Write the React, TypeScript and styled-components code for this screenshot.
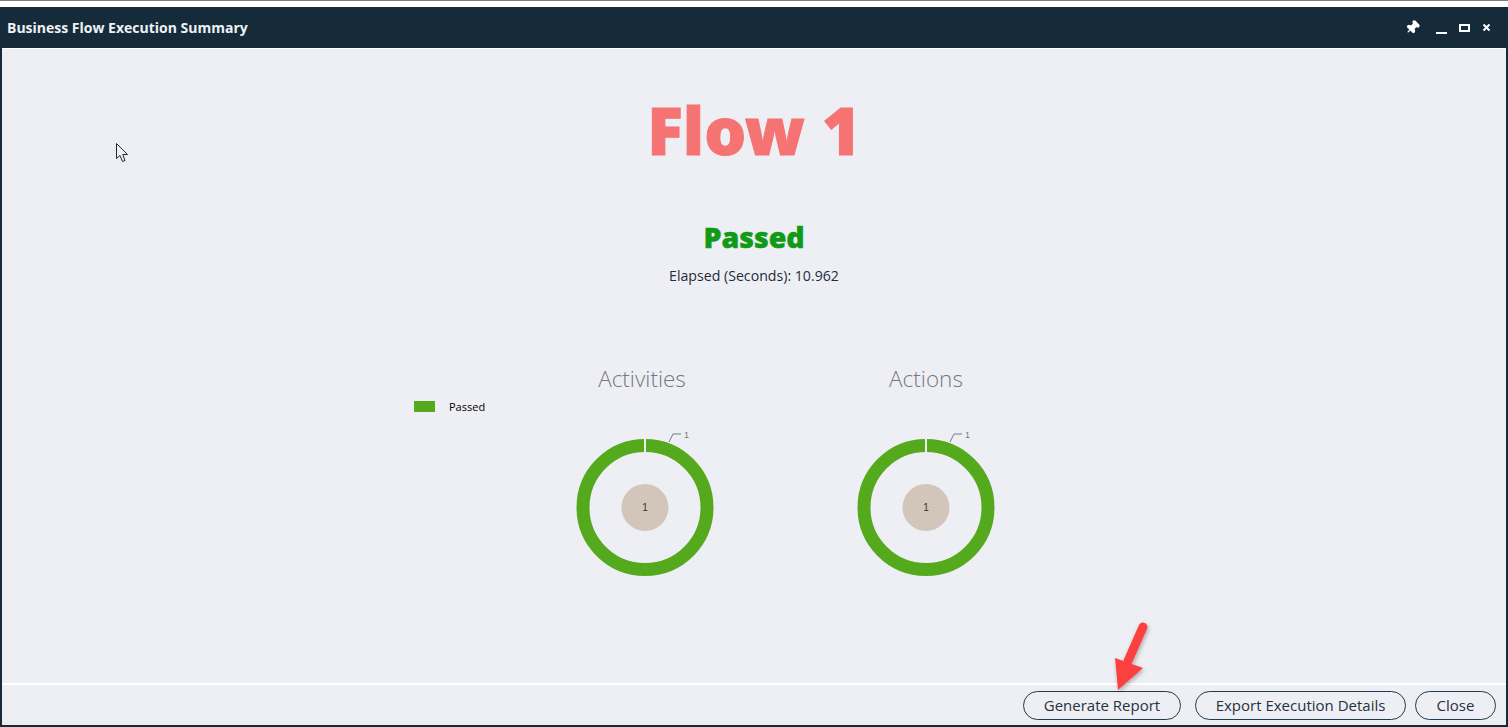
import React from "react";
import styled, { createGlobalStyle } from "styled-components";
import { Pin } from "lucide-react";

const GlobalStyle = createGlobalStyle`
  html, body {
    margin: 0;
    padding: 0;
    background: #fff;
  }
  #root {
    height: 727px;
  }
`;

const Page = styled.div`
  position: relative;
  box-sizing: border-box;
  width: 1508px;
  height: 727px;
  overflow: hidden;
  display: flex;
  flex-direction: column;
  padding-top: 7px;
  background: #fff;
  border-top: 1px solid #7d7d7d;
  font-family: "Open Sans", sans-serif;
`;

const Window = styled.div`
  flex: 1;
  min-height: 0;
  display: flex;
  flex-direction: column;
  border-left: 2px solid #162b3a;
  border-right: 2px solid #162b3a;
  border-bottom: 2px solid #162b3a;
  margin-top: -1px;
`;

const TitleBar = styled.div`
  flex: none;
  height: 41px;
  margin: 0 -2px;
  padding: 0 17px 0 7px;
  display: flex;
  align-items: center;
  justify-content: space-between;
  background: #162b3a;
`;

const Title = styled.div`
  color: #eef1f6;
  font-size: 14px;
  font-weight: 700;
`;

const WindowControls = styled.div`
  display: flex;
  align-items: center;
  gap: 12px;
  color: #fff;
`;

const ControlIcon = styled.svg`
  display: block;
  fill: none;
  stroke: #fff;
`;

const PinIcon = styled(Pin)`
  display: block;
  margin-right: 3px;
  fill: #fff;
  transform: rotate(45deg);
`;

const Body = styled.div`
  flex: 1;
  min-height: 0;
  display: flex;
  flex-direction: column;
  align-items: stretch;
  background: #eeeff5;
  border-top: 1px solid #fff;
`;

const FlowName = styled.h1`
  margin: 31px 0 0;
  color: #f57373;
  font-family: "Noto Sans", "Open Sans", sans-serif;
  font-size: 66px;
  line-height: 98px;
  font-weight: 900;
  text-align: center;
  -webkit-text-stroke: 1px #f57373;
`;

const Status = styled.div`
  margin-top: 40px;
  color: #119a18;
  font-family: "Noto Sans", "Open Sans", sans-serif;
  font-size: 28.5px;
  line-height: 38px;
  font-weight: 900;
  text-align: center;
  -webkit-text-stroke: 0.5px #119a18;
`;

const Elapsed = styled.div`
  margin-top: 10px;
  color: #1f2d3a;
  font-size: 14.15px;
  line-height: 19px;
  text-align: center;
`;

const ChartRow = styled.div`
  margin-top: 79px;
  padding-left: 412px;
  display: flex;
  align-items: flex-start;
`;

const Legend = styled.div`
  width: 90.5px;
  margin-top: 35px;
  display: flex;
  align-items: center;
  gap: 14px;
  color: #000;
  font-size: 11px;
  line-height: 15px;
  white-space: nowrap;
`;

const LegendSwatch = styled.span`
  flex: none;
  width: 21px;
  height: 11px;
  background: #54a91c;
`;

const ChartPanel = styled.div`
  width: 281px;
  display: flex;
  flex-direction: column;
  align-items: center;
`;

const ChartTitle = styled.div<{ $shift: number }>`
  margin-right: ${(p) => p.$shift}px;
  color: #77777e;
  font-size: 22.5px;
  line-height: 30px;
  font-weight: 300;
  font-family: "Open Sans", sans-serif;
`;

const ChartSvg = styled.svg`
  display: block;
  margin-top: 34px;
`;

const Footer = styled.div`
  flex: none;
  margin-top: auto;
  height: 42px;
  box-sizing: border-box;
  padding: 6px 10px 0 0;
  display: flex;
  justify-content: flex-end;
  border-top: 2px solid #fff;
`;

const Button = styled.button<{ $width: number; $gap: number }>`
  height: 29px;
  box-sizing: border-box;
  padding: 0 0 2px;
  width: ${(p) => p.$width}px;
  margin-right: ${(p) => p.$gap}px;
  border: 1px solid #1f3a4d;
  border-radius: 15px;
  background: transparent;
  color: #25323d;
  font-family: "Open Sans", sans-serif;
  font-size: 15px;
  cursor: pointer;
`;

const Arrow = styled.svg`
  position: absolute;
  left: 1105px;
  top: 613px;
  overflow: visible;
`;

const Cursor = styled.svg`
  position: absolute;
  left: 115px;
  top: 141px;
`;

const Donut = () => (
  <ChartSvg width="140" height="150" viewBox="0 0 140 150">
    <circle cx="70" cy="79.5" r="62" fill="none" stroke="#54a91c" strokeWidth="13" />
    <rect x="69" y="10" width="2" height="15" fill="#eeeff5" />
    <circle cx="70" cy="79.5" r="23.5" fill="#d2c5b9" />
    <path d="M94 14 L98 6 H106" fill="none" stroke="#77777d" strokeWidth="1" />
    <text x="109" y="10" fontSize="9" fill="#77777d" fontFamily="Liberation Sans, sans-serif">1</text>
    <text x="70" y="83" fontSize="10" fill="#333" textAnchor="middle" fontFamily="Liberation Sans, sans-serif">1</text>
  </ChartSvg>
);

const App: React.FC = () => {
  return (
    <Page>
      <GlobalStyle />
      <Window>
        <TitleBar>
          <Title>Business Flow Execution Summary</Title>
          <WindowControls>
            <PinIcon size={15} strokeWidth={2} />
            <ControlIcon width="12" height="12" viewBox="0 0 12 12" strokeWidth="2">
              <path d="M1 11H12" />
            </ControlIcon>
            <ControlIcon width="11" height="9" viewBox="0 0 11 9" strokeWidth="2">
              <rect x="1" y="2" width="9" height="6" />
            </ControlIcon>
            <ControlIcon width="9" height="9" viewBox="0 0 9 9" strokeWidth="2">
              <path d="M1.5 1.5L7.5 7.5M7.5 1.5L1.5 7.5" />
            </ControlIcon>
          </WindowControls>
        </TitleBar>
        <Body>
          <FlowName>Flow 1</FlowName>
          <Status>Passed</Status>
          <Elapsed>Elapsed (Seconds): 10.962</Elapsed>
          <ChartRow>
            <Legend>
              <LegendSwatch />
              Passed
            </Legend>
            <ChartPanel>
              <ChartTitle $shift={6}>Activities</ChartTitle>
              <Donut />
            </ChartPanel>
            <ChartPanel>
              <ChartTitle $shift={0}>Actions</ChartTitle>
              <Donut />
            </ChartPanel>
          </ChartRow>
          <Footer>
            <Button $width={158} $gap={14}>Generate Report</Button>
            <Button $width={211} $gap={9}>Export Execution Details</Button>
            <Button $width={81} $gap={0}>Close</Button>
          </Footer>
        </Body>
      </Window>
      <Cursor width="16" height="22" viewBox="0 0 16 22">
        <path d="M1.5 1.5V16.5L5 13.5L7.5 19.5L10 18.5L7.8 12.5H12.5Z" fill="#eeeff5" stroke="#22282e" strokeWidth="1" />
      </Cursor>
      <Arrow width="44" height="76" viewBox="0 0 44 76">
        <defs>
          <filter id="arrowShadow" x="-30%" y="-30%" width="160%" height="160%">
            <feDropShadow dx="1" dy="2" stdDeviation="2" floodColor="#000" floodOpacity="0.3" />
          </filter>
        </defs>
        <g filter="url(#arrowShadow)">
          <path d="M38 13L23 47" stroke="#fb4040" strokeWidth="9" strokeLinecap="round" fill="none" />
          <path d="M10 44L38 54L13 76Z" fill="#fb4040" />
        </g>
      </Arrow>
    </Page>
  );
};

export default App;
